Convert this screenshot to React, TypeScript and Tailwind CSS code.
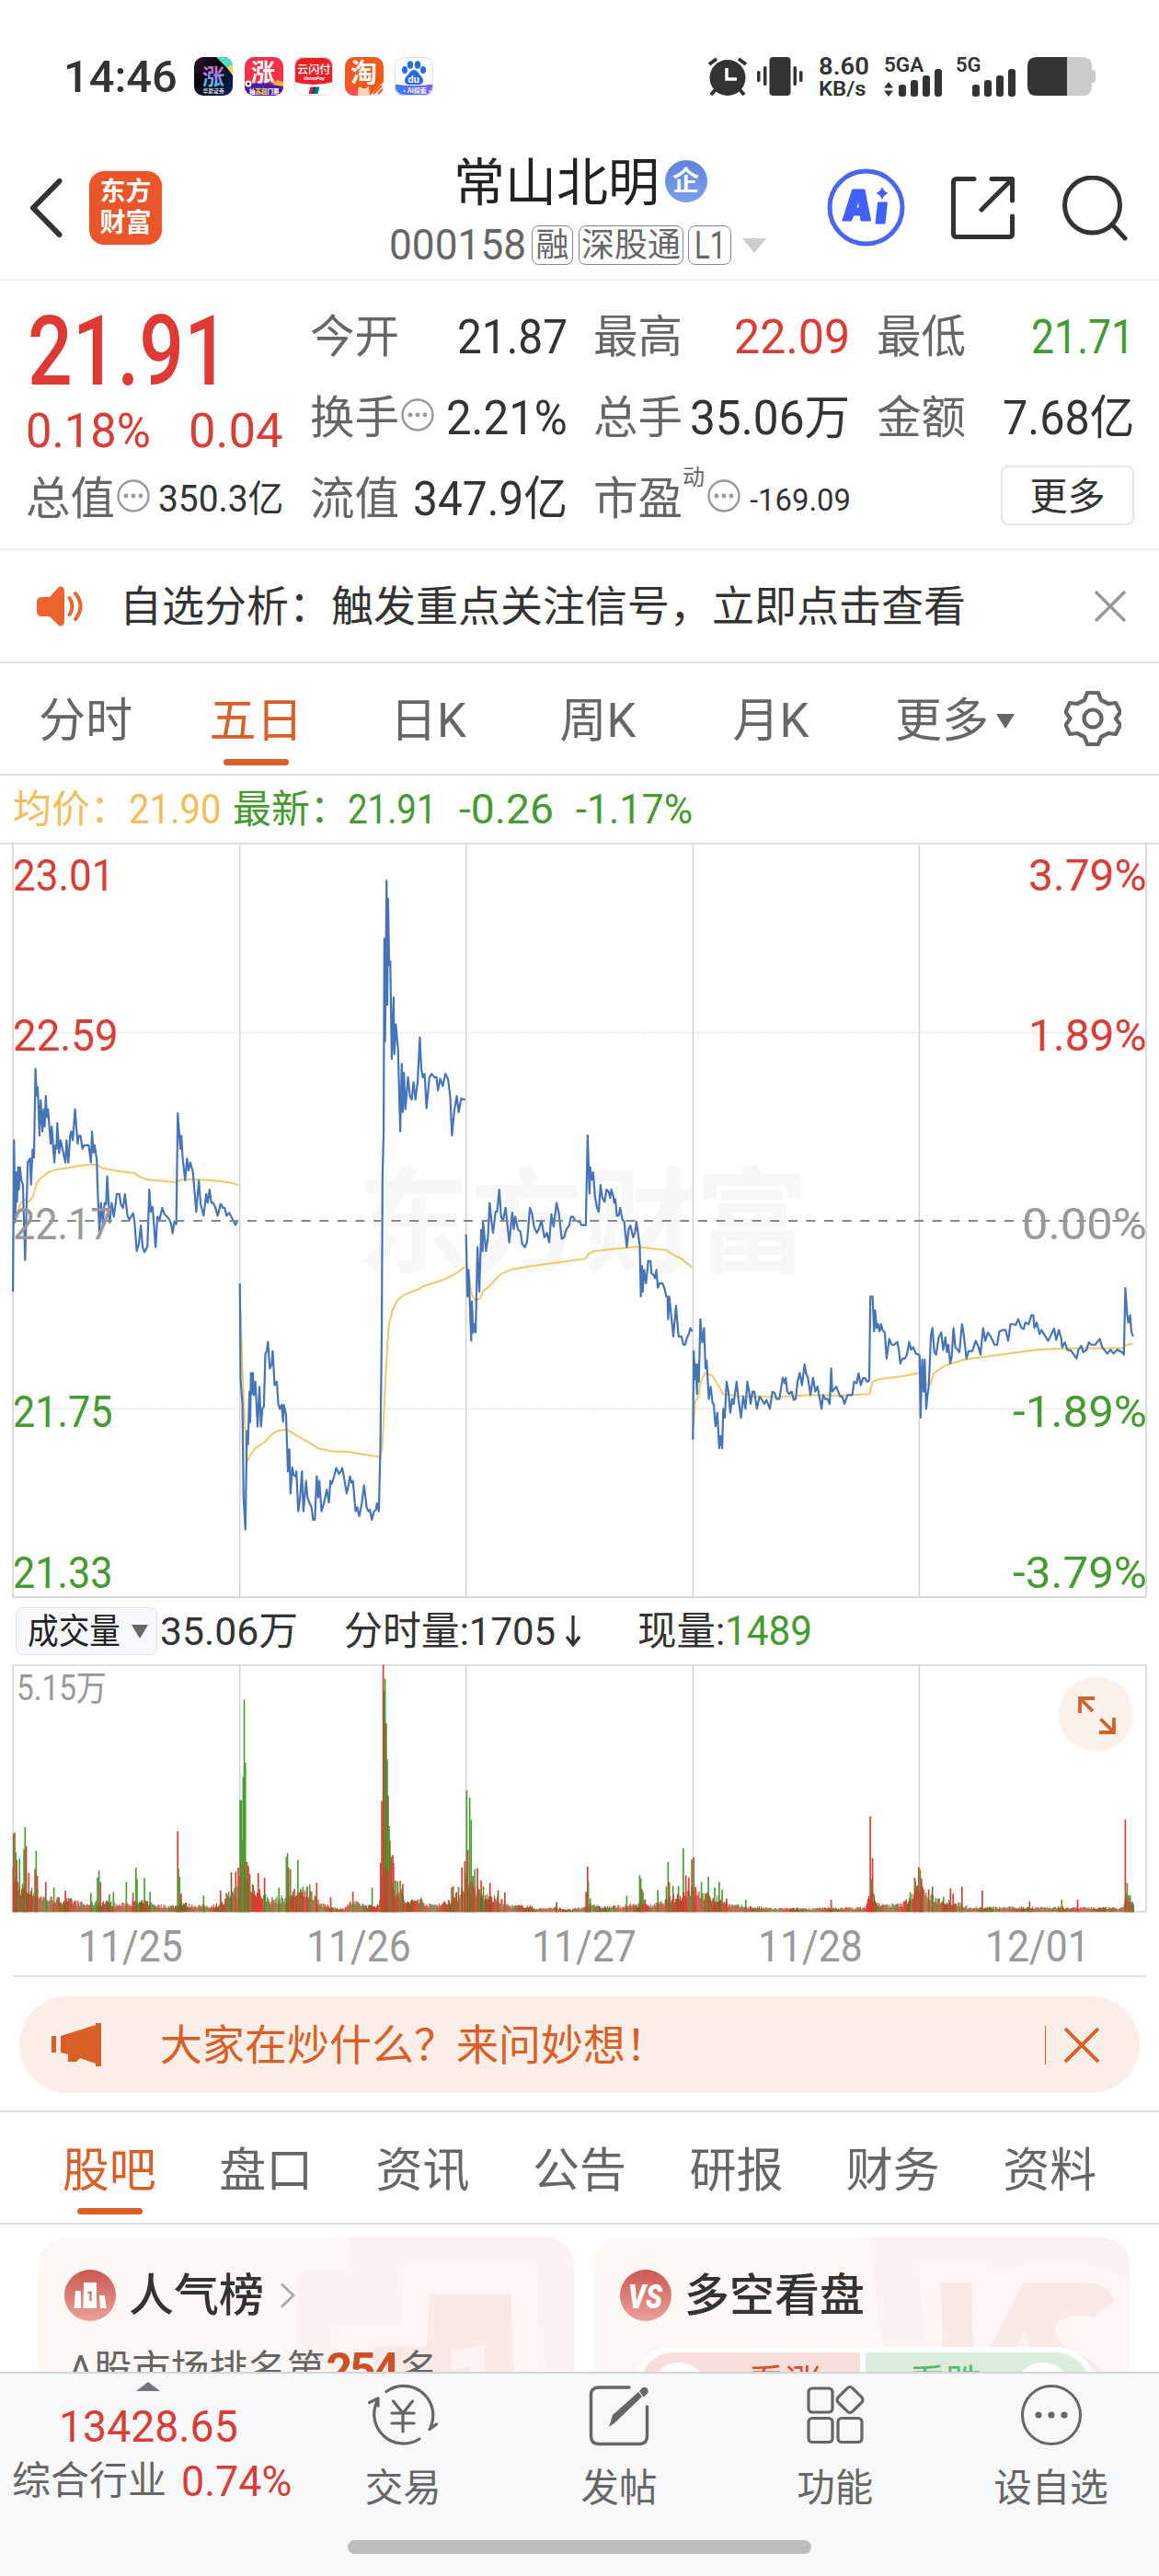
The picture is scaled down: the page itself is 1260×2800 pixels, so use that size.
import { useLayoutEffect, useRef, useState } from "react";
import type { ReactNode } from "react";

/** Text condensed or widened horizontally so that it fills the width its class gives it. */
function Fit({ className = "", children }: { className?: string; children: ReactNode }) {
  const box = useRef<HTMLSpanElement>(null);
  const text = useRef<HTMLSpanElement>(null);
  const [k, setK] = useState(1);
  useLayoutEffect(() => {
    if (box.current && text.current && text.current.offsetWidth) {
      setK(box.current.clientWidth / text.current.offsetWidth);
    }
  }, []);
  return (
    <span ref={box} className={`block shrink-0 whitespace-nowrap ${className}`}>
      <span ref={text} className="inline-block origin-left" style={{ transform: `scaleX(${k})` }}>
        {children}
      </span>
    </span>
  );
}

function More() {
  return (
    <svg className="h-[36px] w-[36px] shrink-0" viewBox="0 0 36 36" fill="none">
      <circle cx="18" cy="18" r="16.5" stroke="#999" strokeWidth="2.4" />
      <g fill="#999">
        <circle cx="10" cy="18" r="2.4" />
        <circle cx="18" cy="18" r="2.4" />
        <circle cx="26" cy="18" r="2.4" />
      </g>
    </svg>
  );
}

function Bars() {
  return (
    <svg className="h-[30px] w-[48px] shrink-0" viewBox="0 0 48 30" fill="#333">
      <rect x="0" y="17" width="8" height="13" rx="3" />
      <rect x="13" y="12" width="8" height="18" rx="3" />
      <rect x="26" y="7" width="8" height="23" rx="3" />
      <rect x="39" y="0" width="8" height="30" rx="3" />
    </svg>
  );
}

const cjk = "'Noto Sans CJK SC'";

function StatusBar() {
  return (
    <div className="flex h-[140px] shrink-0 items-start pl-[69px] pt-[62px] text-[#333]">
      <Fit className="w-[124px] text-[48px] font-medium leading-[44px]">14:46</Fit>
      <div className="ml-[18px] flex gap-[12.5px]">
        <svg className="h-[42px] w-[42px] overflow-visible" viewBox="0 0 42 42">
          <defs>
            <linearGradient id="a1" x1="0" y1="0" x2="1" y2="1">
              <stop offset="0" stopColor="#3b1030" />
              <stop offset=".4" stopColor="#07070d" />
              <stop offset="1" stopColor="#0a2560" />
            </linearGradient>
            <linearGradient id="a2" x1="0" y1="0" x2="0" y2="1">
              <stop offset="0" stopColor="#f45ba0" />
              <stop offset=".5" stopColor="#a880f0" />
              <stop offset="1" stopColor="#28dcec" />
            </linearGradient>
            <clipPath id="ac">
              <rect width="42" height="42" rx="10" />
            </clipPath>
          </defs>
          <g clipPath="url(#ac)">
            <rect width="42" height="42" fill="url(#a1)" />
            <path d="M24 0h18v18z" fill="#4fe0c0" />
            <path d="M36 12l6-4v12z" fill="#ffd54a" />
          </g>
          <text x="9" y="30" fontSize="24" fontWeight="700" fontFamily={cjk} fill="url(#a2)">涨</text>
          <text x="9.500" y="38.500" fontSize="5.800" fontWeight="700" fontFamily={cjk} fill="#ddd">华夏证券</text>
        </svg>
        <svg className="h-[42px] w-[42px] overflow-visible" viewBox="0 0 42 42">
          <g clipPath="url(#ac)">
            <rect width="42" height="42" fill="#f5304a" />
            <path d="M0 31q21-6 42 0v11H0z" fill="#4a1fa8" />
            <path d="M30 30l5-5 7 2v5z" fill="#ffb03a" />
            <circle cx="4" cy="29" r="3.500" fill="#fff" />
            <circle cx="4" cy="29" r="1.500" fill="#222" />
          </g>
          <text x="7" y="26" fontSize="26" fontWeight="700" fontFamily={cjk} fill="#fff">涨</text>
          <text x="5" y="40" fontSize="6.500" fontWeight="900" fontFamily={cjk} fill="#fff">抽<tspan fill="#ffd54a">苏超</tspan>门票</text>
        </svg>
        <svg className="h-[42px] w-[42px] overflow-visible" viewBox="0 0 42 42">
          <g clipPath="url(#ac)">
            <rect width="42" height="42" fill="#fff" />
            <path d="M0 0h42v27q-21 6-42 0z" fill="#ee1f23" />
            <path d="M17.500 32.500h5l-2 7.500h-5z" fill="#e21b2c" />
            <path d="M21 32.500h3.500l-2 7.500H19z" fill="#0b4a8c" />
            <path d="M24 32.500h3.500l-2 7.500H22z" fill="#007a80" />
          </g>
          <rect x=".5" y=".5" width="41" height="41" rx="10" fill="none" stroke="#e4e0e0" />
          <text x="3" y="18" fontSize="12.200" fontWeight="500" fontFamily={cjk} fill="#fff">云闪付</text>
          <text x="10" y="25" fontSize="5.500" fontWeight="700" fontStyle="italic" fill="#fff">UnionPay</text>
        </svg>
        <svg className="h-[42px] w-[42px] overflow-visible" viewBox="0 0 42 42">
          <g clipPath="url(#ac)">
            <rect width="42" height="42" fill="#f2581e" />
            <circle cx="9" cy="39" r="5" fill="#ff4d5e" />
            <path d="M14 42v-7l2-3 3 2h4l3-3 1 11z" fill="#f3d3b4" />
            <path d="M27 42L42 27v15z" fill="#fbe9dc" />
            <path d="M31 40l9-9M36 40l5-5" stroke="#f2581e" strokeWidth="2" />
          </g>
          <text x="6" y="28" fontSize="29" fontWeight="700" fontFamily={cjk} fill="#fff">淘</text>
        </svg>
        <svg className="h-[42px] w-[42px] overflow-visible" viewBox="0 0 42 42">
          <defs>
            <linearGradient id="b1" x1="0" x2="1">
              <stop offset="0" stopColor="#3c7dfa" />
              <stop offset="1" stopColor="#7b5cf5" />
            </linearGradient>
          </defs>
          <g clipPath="url(#ac)">
            <rect width="42" height="42" fill="#fff" />
            <path d="M0 29.500q21 3 42 0V42H0z" fill="url(#b1)" />
          </g>
          <rect x=".5" y=".5" width="41" height="41" rx="10" fill="none" stroke="#dde2ee" />
          <g fill="#2468ec">
            <ellipse cx="11" cy="14" rx="3" ry="4" />
            <ellipse cx="17" cy="8.500" rx="3.200" ry="4.200" />
            <ellipse cx="25" cy="8.500" rx="3.200" ry="4.200" />
            <ellipse cx="31" cy="14" rx="3" ry="4" />
            <path d="M21 14c4 0 5 4 8 7s3 9-3 9h-10c-6 0-6-6-3-9s4-7 8-7z" />
          </g>
          <text x="14.500" y="28" fontSize="11" fontWeight="700" fill="#fff">du</text>
          <text x="7" y="39" fontSize="7" fontWeight="700" fontFamily={cjk} fill="#fff">·AI探索·</text>
        </svg>
      </div>
      <svg className="ml-[298px] h-[42px] w-[44px]" viewBox="0 0 44 42" fill="none">
        <circle cx="22" cy="22.500" r="19.500" fill="#333" />
        <path d="M2 8L10 2M42 8L34 2" stroke="#333" strokeWidth="4" />
        <path d="M10 34l-6 7M34 34l6 7" stroke="#333" strokeWidth="4" />
        <path d="M21 12v12h11" stroke="#fff" strokeWidth="3.500" />
      </svg>
      <svg className="ml-[10px] h-[42px] w-[50px]" viewBox="0 0 50 42" fill="#333">
        <rect x="13.500" width="23" height="42" rx="4" />
        <rect x="0" y="15" width="3.500" height="12" rx="1.500" />
        <rect x="7" y="10" width="3.500" height="21" rx="1.500" />
        <rect x="39.500" y="10" width="3.500" height="21" rx="1.500" />
        <rect x="46" y="15" width="3.500" height="12" rx="1.500" />
      </svg>
      <div className="ml-[17px] font-semibold">
        <Fit className="w-[55px] text-[25px] leading-[22px]">8.60</Fit>
        <Fit className="mt-[3px] w-[52px] text-[22px] leading-[20px]">KB/s</Fit>
      </div>
      <div className="ml-[16px] w-[66px] font-semibold">
        <Fit className="w-[43px] text-[22px] leading-[18px]">5GA</Fit>
        <div className="-mt-[5px] flex items-end">
          <svg className="mr-[6px] h-[16px] w-[10px]" viewBox="0 0 10 16" fill="#333">
            <path d="M5 0l5 6.500H0zM5 16l5-6.500H0z" />
          </svg>
          <Bars />
        </div>
      </div>
      <div className="ml-[12px] w-[66px] font-semibold">
        <Fit className="w-[28px] text-[22px] leading-[18px]">5G</Fit>
        <div className="-mt-[5px] flex justify-end">
          <Bars />
        </div>
      </div>
      <svg className="ml-[12px] h-[42px] w-[74px]" viewBox="0 0 74 42">
        <path d="M43 0h17q10 0 10 10v4h1q3 0 3 3v8q0 3-3 3h-1v4q0 10-10 10H43z" fill="#cbcbcb" />
        <path d="M10 0h33v42H10Q0 42 0 32V10Q0 0 10 0z" fill="#333" />
      </svg>
    </div>
  );
}

function Header() {
  const tag =
    "flex h-[43px] items-center justify-center rounded-[8px] border border-[#888] text-[36px] leading-none";
  return (
    <div className="flex h-[165px] shrink-0 items-start border-b-2 border-[#f0f0f0] pl-[32px]">
      <svg className="mt-[53px] h-[66px] w-[38px]" viewBox="0 0 38 66" fill="none" stroke="#333" strokeWidth="6" strokeLinecap="round" strokeLinejoin="round">
        <path d="M32.500 4L4 33l28.500 29" />
      </svg>
      <div className="ml-[27px] mt-[46px] flex h-[80px] w-[79px] flex-col items-center justify-center rounded-[16px] bg-[#ea5529] text-[28px] font-bold leading-[34px] text-white">
        <span>东方</span>
        <span>财富</span>
      </div>
      <div className="ml-[244px] flex w-[414px] flex-col">
        <div className="mt-[25px] flex h-[64px] items-center pl-[73px]">
          <span className="mt-[4px] text-[56px] leading-[64px] text-[#222]">常山北明</span>
          <svg className="ml-[6px] h-[46px] w-[46px]" viewBox="0 0 46 46">
            <defs>
              <linearGradient id="qi" x1="0" y1="0" x2="0" y2="1">
                <stop offset="0" stopColor="#5f82de" />
                <stop offset="1" stopColor="#7ba0e6" />
              </linearGradient>
            </defs>
            <circle cx="23" cy="23" r="23" fill="url(#qi)" />
            <text x="8" y="33" fontSize="29" fontWeight="700" fontFamily={cjk} fill="#fff">企</text>
          </svg>
        </div>
        <div className="mt-[15px] flex items-center text-[#666]">
          <Fit className="ml-[3px] w-[149px] text-[46px] leading-[45px]">000158</Fit>
          <span className={`ml-[6px] w-[45px] ${tag}`}>融</span>
          <span className={`ml-[6px] w-[114px] ${tag}`}>深股通</span>
          <span className={`ml-[5px] w-[47px] ${tag}`}>
            <Fit className="w-[34px] text-[42px]">L1</Fit>
          </span>
          <svg className="ml-[12px] h-[16px] w-[26px]" viewBox="0 0 26 16">
            <path d="M0 0h26L13 16z" fill="#ccc" />
          </svg>
        </div>
      </div>
      <svg className="ml-[65px] mt-[43px] h-[85px] w-[85px]" viewBox="0 0 85 85">
        <circle cx="42.500" cy="42.500" r="39.500" fill="#fff" stroke="#4867ee" strokeWidth="5" />
        <g fill="#4160f5" stroke="#4160f5" strokeWidth="2" strokeLinejoin="round">
          <path d="M28 23.500h12.500l6.500 33h-9.500l-.8-6h-8.200l-2.500 6H17.500zM34.500 33l-3.500 10.500h5z" fillRule="evenodd" />
          <path d="M56 37.500h9l-2.500 22h-9z" />
        </g>
        <path d="M60 20q1.500 5 6.500 7-5 2-6.500 7-1.500-5-6.500-7 5-2 6.500-7z" fill="#4160f5" />
      </svg>
      <svg className="ml-[50px] mt-[52px] h-[68px] w-[69px]" viewBox="0 0 69 68" fill="none" stroke="#333" strokeWidth="5" strokeLinecap="round" strokeLinejoin="round">
        <path d="M25 2.500H6Q2.500 2.500 2.500 6v56q0 3.500 3.500 3.500h57q3.500 0 3.500-3.500V43M44 2.500h22.500V26M65 4L33 36" />
      </svg>
      <svg className="ml-[52px] mt-[51px] h-[72px] w-[72px]" viewBox="0 0 72 72" fill="none" stroke="#333" strokeWidth="5" strokeLinecap="round">
        <circle cx="32.500" cy="32" r="30" />
        <path d="M54 53l14 15" />
      </svg>
    </div>
  );
}

function Quote() {
  const row = "flex h-[88px] items-center";
  const lab = "shrink-0 whitespace-nowrap text-[48.5px] leading-[56px] text-[#666]";
  const val = "text-[51px] leading-[56px] text-[#333]";
  return (
    <div className="flex h-[293px] shrink-0 border-b-2 border-[#ededed] pt-[18px]">
      <div className="ml-[28px] w-[309px]">
        <div className="flex h-[116px] items-center pt-[4px]">
          <Fit className="ml-[2px] w-[219px] text-[105px] font-medium leading-[100px] text-[#dd3a33]">21.91</Fit>
        </div>
        <div className="flex h-[60px] items-center text-[#d93d35]">
          <Fit className="w-[136px] text-[51px] leading-[60px]">0.18%</Fit>
          <Fit className="ml-[41px] w-[102px] text-[51px] leading-[60px]">0.04</Fit>
        </div>
        <div className={row}>
          <span className={lab}>总值</span>
          <span className="-mt-[8px] ml-[2px]"><More /></span>
          <Fit className="ml-[9px] w-[136px] text-[40px] leading-[56px] text-[#333]">350.3亿</Fit>
        </div>
      </div>
      <div className="w-[280px]">
        <div className={`${row} justify-between`}>
          <span className={lab}>今开</span>
          <Fit className={`w-[120px] ${val}`}>21.87</Fit>
        </div>
        <div className={row}>
          <span className={lab}>换手</span>
          <span className="-mt-[8px] ml-[2px]"><More /></span>
          <Fit className={`ml-[13px] w-[132px] ${val}`}>2.21%</Fit>
        </div>
        <div className={`${row} justify-between`}>
          <span className={lab}>流值</span>
          <Fit className={`w-[168px] ${val}`}>347.9亿</Fit>
        </div>
      </div>
      <div className="ml-[28px] w-[279px]">
        <div className={`${row} justify-between`}>
          <span className={lab}>最高</span>
          <Fit className="w-[126px] text-[51px] leading-[56px] text-[#d93d35]">22.09</Fit>
        </div>
        <div className={`${row} justify-between`}>
          <span className={lab}>总手</span>
          <Fit className={`w-[174px] ${val}`}>35.06万</Fit>
        </div>
        <div className={row}>
          <span className={lab}>市盈</span>
          <span className="-mt-[49px] text-[24px] leading-[24px] text-[#666]">动</span>
          <span className="-mt-[8px] ml-[3px]"><More /></span>
          <Fit className="ml-[10px] w-[110px] text-[34px] leading-[54px] text-[#333]">-169.09</Fit>
        </div>
      </div>
      <div className="ml-[29px] w-[280px]">
        <div className={`${row} justify-between`}>
          <span className={lab}>最低</span>
          <Fit className="w-[112px] text-[51px] leading-[56px] text-[#459a31]">21.71</Fit>
        </div>
        <div className={`${row} justify-between`}>
          <span className={lab}>金额</span>
          <Fit className={`w-[143px] ${val}`}>7.68亿</Fit>
        </div>
        <div className={`${row} justify-end`}>
          <span className="-mt-[10px] flex h-[65px] w-[145px] items-center justify-center rounded-[8px] border-2 border-[#e4e7e9] pt-[3px] text-[41px] leading-[56px] text-[#333]">
            更多
          </span>
        </div>
      </div>
    </div>
  );
}

function Notice() {
  return (
    <div className="flex h-[123px] shrink-0 items-center border-b-2 border-[#dcdcdc] pl-[39px]">
      <svg className="h-[44px] w-[53px]" viewBox="0 0 53 44" fill="none">
        <path d="M7 12h8L25 1q6-2 6 6v30q0 8-6 6L15 33H7q-6 0-6-5V17q0-5 6-5z" fill="#ec632c" />
        <path d="M36.500 13q6 9 0 18M43 8q11 14 0 28" stroke="#ec632c" strokeWidth="4" strokeLinecap="round" />
      </svg>
      <span className="ml-[38px] whitespace-nowrap text-[46px] leading-[60px] text-[#333]">
        自选分析：触发重点关注信号，立即点击查看
      </span>
      <svg className="ml-[140px] h-[34px] w-[34px]" viewBox="0 0 34 34" stroke="#999" strokeWidth="3.500">
        <path d="M1 1l32 32M33 1L1 33" />
      </svg>
    </div>
  );
}

function PeriodTabs() {
  return (
    <div className="grid h-[122px] shrink-0 grid-cols-[186px_185px_185px_188px_188px_227px_101px] border-b-2 border-[#dcdcdc] text-[51px] leading-[126px] text-[#666]">
      <span className="text-center">分时</span>
      <span className="relative text-center text-[#d95f27]">
        五日
        <span className="absolute left-[57px] top-[104px] h-[7px] w-[71px] rounded-full bg-[#d95f27]" />
      </span>
      <span className="pl-[4px] text-center">日K</span>
      <span className="text-center">周K</span>
      <span className="text-center">月K</span>
      <span className="flex items-center pl-[41px]">
        更多
        <svg className="ml-[8px] h-[16px] w-[20px]" viewBox="0 0 20 16">
          <path d="M0 0h20L10 16z" fill="#666" />
        </svg>
      </span>
      <span className="flex items-center pb-[6px]">
        <svg className="-ml-[2px] h-[62px] w-[62px]" viewBox="0 0 62 62" fill="none" stroke="#666" strokeWidth="4.200" strokeLinejoin="round">
          <path d="M25 3h12l3 8 8 4 8-1 5 10-5 7 5 7-5 10-8-1-8 4-3 8H25l-3-8-8-4-8 1L1.500 38l5-7-5-7L6 14l8 1 8-4z" />
          <circle cx="31" cy="31" r="9.500" />
        </svg>
      </span>
    </div>
  );
}

function Legend() {
  return (
    <div className="flex h-[73px] shrink-0 items-center whitespace-nowrap pl-[14px] text-[42px] leading-[76px] text-[#459a31]">
      <span className="w-[126px] text-[#f0be5a]">均价：</span>
      <Fit className="w-[101px] text-[44px] text-[#f0be5a]">21.90</Fit>
      <span className="ml-[12px] w-[125px]">最新：</span>
      <Fit className="w-[97px] text-[44px]">21.91</Fit>
      <Fit className="ml-[24px] w-[103px] text-[44px]">-0.26</Fit>
      <Fit className="ml-[24px] w-[127px] text-[44px]">-1.17%</Fit>
    </div>
  );
}

const PRICE = [
  "35,922 38,615 41,780 44,680 46,740 49,670 51,715 54,670 58,697 62,705 68,858 75,660 81,652 84,705 88,634 92,650 96,470 99,525 102,507 107,605 110,534 115,597 118,552 121,587 124,525 127,568 130,552 137,622 140,587 147,660 150,625 153,632 155,580 160,641 164,615 170,636 177,660 180,615 185,660 190,605 193,597 197,615 203,552 210,622 213,606 218,606 223,632 228,625 240,625 246,660 249,597 253,640 256,625 262,655 264,710 269,800 273,742 278,782 283,742 287,745 290,688 297,782 302,742 308,770 316,724 323,724 327,745 333,752 338,724 345,768 350,776 360,763 364,780 370,840 376,824 381,788 386,832 391,842 399,830 404,715 408,760 413,750 421,832 426,770 432,775 439,752 445,765 452,770 458,776 463,785 467,804 472,780 477,785 481,560 488,632 491,606 494,650 501,696 506,652 510,676 515,660 522,680 531,760 538,697 543,745 551,768 558,724 562,742 567,715 572,742 577,742 583,752 589,768 597,744 603,752 608,752 613,768 620,762 630,776 637,787 642,780",
  "649,906 651,1100 656,1150 659,1340 664,1405 668,1205 671,1232 675,1125 677,1187 679,1087 681,1130 684,1087 687,1132 691,1105 697,1196 702,1115 706,1196 710,1160 714,1155 718,1048 722,1043 725,1024 730,1078 735,1070 738,1043 743,1112 749,1105 753,1150 757,1160 762,1152 766,1186 768,1152 774,1172 779,1287 783,1242 786,1332 791,1279 795,1295 800,1297 802,1287 807,1368 812,1340 817,1287 821,1368 828,1306 832,1340 837,1350 843,1360 847,1385 852,1385 857,1297 861,1340 864,1306 870,1368 877,1350 884,1324 890,1350 894,1306 898,1312 904,1297 910,1280 917,1292 922,1287 926,1280 931,1300 938,1332 943,1315 947,1297 951,1310 955,1306 962,1368 967,1360 972,1378 979,1352 985,1315 992,1360 997,1368 1001,1365 1006,1385 1012,1368 1017,1365 1020,1352 1025,1368 1029,1250 1033,1000 1035,690 1038,600 1040,206 1042,414 1046,88 1048,340 1050,125 1053,260 1056,252 1060,450 1065,325 1067,440 1071,380 1077,430 1083,597 1087,460 1090,558 1093,478 1097,552 1104,487 1109,525 1114,532 1119,497 1124,532 1130,497 1136,406 1140,470 1144,487 1149,480 1154,550 1162,487 1168,480 1175,487 1181,487 1185,514 1191,490 1198,505 1205,480 1212,490 1218,525 1223,605 1229,555 1236,525 1241,558 1245,542 1248,530 1252,532 1259,532",
  "1261,806 1265,932 1268,878 1275,1022 1277,942 1280,1005 1283,988 1287,1005 1292,832 1297,922 1302,797 1306,840 1307,780 1315,840 1320,815 1325,742 1330,780 1334,803 1341,760 1345,760 1351,715 1356,770 1361,778 1368,752 1373,788 1378,822 1386,762 1390,795 1394,770 1402,797 1408,800 1413,825 1420,832 1426,822 1434,752 1440,765 1445,790 1452,803 1458,795 1465,778 1473,812 1480,803 1486,822 1492,765 1498,790 1506,742 1512,762 1520,815 1526,812 1533,795 1540,788 1545,770 1551,770 1556,778 1568,780 1573,787 1585,787 1590,605 1595,723 1597,670 1601,695 1605,680 1610,730 1615,750 1620,760 1625,706 1630,732 1636,740 1641,715 1647,720 1651,732 1654,715 1660,730 1662,742 1665,735 1669,768 1674,768 1678,752 1684,776 1689,780 1696,832 1701,795 1706,788 1713,812 1718,803 1722,780 1728,812 1731,830 1734,932 1737,870 1739,922 1743,878 1748,905 1754,860 1760,860 1763,885 1768,888 1772,895 1776,878 1780,914 1785,905 1792,905 1798,915 1803,932 1806,932 1808,978 1811,932 1816,970 1822,1013 1829,951 1836,1013 1844,1013 1849,1030 1854,1030 1859,1015 1863,1010 1868,996 1873,1003",
  "1875,1223 1877,1043 1881,1100 1883,1070 1886,1130 1888,1070 1891,1105 1895,978 1900,1025 1905,996 1909,1078 1912,1062 1918,1140 1923,1115 1928,1148 1931,1150 1936,1195 1941,1168 1946,1240 1950,1215 1954,1240 1957,1160 1961,1178 1966,1105 1971,1125 1976,1168 1981,1140 1985,1150 1993,1105 1998,1140 2005,1178 2011,1135 2017,1160 2022,1105 2027,1125 2031,1150 2036,1125 2041,1125 2048,1160 2055,1135 2062,1142 2068,1150 2074,1142 2083,1160 2090,1125 2096,1128 2101,1140 2109,1140 2113,1120 2118,1097 2123,1108 2126,1097 2130,1125 2136,1130 2142,1125 2148,1142 2153,1140 2158,1105 2164,1087 2170,1112 2177,1070 2181,1088 2186,1097 2193,1132 2200,1097 2206,1125 2212,1115 2218,1140 2223,1160 2227,1132 2233,1140 2239,1140 2245,1150 2249,1078 2252,1125 2257,1120 2263,1115 2268,1125 2274,1135 2279,1135 2285,1150 2293,1132 2306,1132 2311,1105 2318,1108 2323,1088 2329,1112 2335,1098 2341,1098 2346,1105 2352,1103 2355,932 2361,932 2365,1003 2368,960 2372,996 2376,988 2380,1003 2384,988 2388,1000 2394,1005 2399,1058 2406,1018 2413,1030 2420,1030 2428,1024 2432,1040 2436,1068 2442,1058 2448,1058 2454,1050 2460,1024 2465,1040 2471,1035 2478,1048 2487,1050",
  "2488,1050 2491,1178 2495,1060 2499,1125 2502,1060 2506,1160 2510,1130 2513,1115 2519,1010 2523,996 2528,1045 2533,1050 2540,1015 2547,1005 2552,1040 2558,1015 2562,1045 2566,1030 2571,1068 2575,1055 2580,996 2585,1035 2591,1040 2596,1045 2603,988 2608,1010 2615,1058 2621,1043 2631,1043 2640,1022 2648,1035 2653,1050 2660,996 2666,1022 2673,1005 2682,1015 2691,1030 2698,1030 2704,1003 2713,1000 2721,1000 2728,1022 2734,988 2741,988 2748,990 2755,978 2764,996 2770,998 2774,985 2783,988 2791,970 2796,970 2799,996 2805,985 2813,1008 2818,1000 2828,1012 2836,1022 2844,1010 2852,997 2858,1020 2865,1000 2871,1015 2874,1035 2881,1025 2888,1040 2898,1042 2913,1058 2918,1040 2926,1032 2931,1045 2940,1040 2946,1025 2953,1030 2963,1030 2976,1018 2982,1035 2988,1040 2996,1048 3005,1040 3013,1048 3023,1040 3036,1045 3041,1050 3045,915 3050,970 3053,985 3058,970 3061,1003 3066,1013",
];

const AVERAGE = [
  "40,785 48,760 55,745 65,735 78,740 88,730 95,715 100,700 110,692 130,680 150,675 190,670 220,666 262,664 275,671 310,676 365,682 380,690 400,695 475,700 490,695 540,695 600,698 630,702 646,706",
  "651,960 656,1080 662,1180 667,1270 680,1250 690,1240 715,1228 735,1212 750,1205 775,1202 800,1213 840,1230 860,1240 900,1246 940,1247 990,1253 1028,1258 1034,1240 1040,1150 1045,1070 1052,990 1062,960 1075,940 1090,930 1130,918 1150,910 1200,898 1230,887 1258,872",
  "1261,872 1268,880 1275,925 1287,942 1300,935 1308,920 1320,914 1340,898 1355,887 1380,878 1440,870 1500,864 1568,857 1585,855 1593,845 1608,840 1668,835 1723,831 1768,835 1803,838 1818,846 1843,855 1873,873",
  "1876,1200 1881,1145 1890,1135 1896,1105 1908,1087 1928,1093 1943,1112 1956,1130 1998,1134 2108,1136 2188,1132 2268,1133 2353,1130 2361,1105 2378,1100 2448,1093 2487,1087",
  "2490,1120 2503,1110 2518,1110 2526,1088 2558,1072 2608,1060 2688,1052 2748,1046 2808,1040 2888,1037 3038,1037 3048,1030 3065,1028",
];

const DAY_LINES = [649, 1261, 1875, 2487.5];

function PriceChart() {
  const l = "absolute left-[14px] text-[48px] leading-[48px]";
  const r = "absolute right-[13px] text-[48px] leading-[48px]";
  return (
    <div className="relative h-[821px] shrink-0">
      <Fit className="absolute left-[388px] top-[350px] w-[491px] text-[124px] font-bold leading-[130px] text-[#f7f7f7]">
        东方财富
      </Fit>
      <svg className="absolute inset-0 h-full w-full" viewBox="0 11 3136 1533" preserveAspectRatio="none" fill="none">
        <g stroke="#dadada" strokeWidth="2">
          <path d="M0 12.500H3136M35 1542H3102" vectorEffect="non-scaling-stroke" />
          <path d="M35 12V1542M3101 12V1542" vectorEffect="non-scaling-stroke" />
          {DAY_LINES.map((x) => (
            <path key={x} d={`M${x} 15V1542`} stroke="#d2d2d2" strokeWidth="1.500" vectorEffect="non-scaling-stroke" />
          ))}
        </g>
        <path d="M35 397H3101M35 1160H3101" stroke="#cfcfcf" strokeDasharray="1.500 1.500" vectorEffect="non-scaling-stroke" />
        {AVERAGE.map((p) => (
          <polyline key={p} points={p} stroke="#f0c866" strokeWidth="2" strokeLinejoin="round" vectorEffect="non-scaling-stroke" />
        ))}
        {PRICE.map((p) => (
          <polyline key={p} points={p} stroke="#4674b8" strokeWidth="2.200" strokeLinejoin="round" vectorEffect="non-scaling-stroke" />
        ))}
        <path d="M35 778.500H3101" stroke="#888" strokeWidth="2" strokeDasharray="10 9.600" vectorEffect="non-scaling-stroke" />
      </svg>
      <div className="text-[#d93d35]">
        <Fit className={`${l} top-[12px] w-[111px]`}>23.01</Fit>
        <Fit className={`${l} top-[186px] w-[115px]`}>22.59</Fit>
        <Fit className={`${r} top-[12px] w-[129px]`}>3.79%</Fit>
        <Fit className={`${r} top-[186px] w-[129px]`}>1.89%</Fit>
      </div>
      <div className="text-[#999]">
        <Fit className={`${l} top-[391px] w-[109px]`}>22.17</Fit>
        <Fit className={`${r} top-[391px] w-[136px]`}>0.00%</Fit>
      </div>
      <div className="text-[#459a31]">
        <Fit className={`${l} top-[595px] w-[109px]`}>21.75</Fit>
        <Fit className={`${l} top-[770px] w-[109px]`}>21.33</Fit>
        <Fit className={`${r} top-[595px] w-[146px]`}>-1.89%</Fit>
        <Fit className={`${r} top-[770px] w-[146px]`}>-3.79%</Fit>
      </div>
    </div>
  );
}

function VolumeHead() {
  return (
    <div className="flex h-[72px] shrink-0 items-center pl-[17px] text-[43px] leading-[64px] text-[#333]">
      <div className="flex h-[52px] w-[154px] items-center rounded-[8px] border border-[#dfe2e6] bg-[#f6f8fb] pl-[12px] text-[#222]">
        <Fit className="w-[101px] text-[38px] leading-[54px]">成交量</Fit>
        <svg className="ml-[12px] h-[15px] w-[18px]" viewBox="0 0 18 15">
          <path d="M0 0h18L9 15z" fill="#666" />
        </svg>
      </div>
      <Fit className="ml-[3px] w-[150px]">35.06万</Fit>
      <Fit className="ml-[50px] w-[230px]">分时量:1705</Fit>
      <svg className="ml-[9px] h-[34px] w-[20px]" viewBox="0 0 20 34" fill="none" stroke="#333" strokeWidth="3.200">
        <path d="M10 0v32M3 23l7 9 7-9" />
      </svg>
      <Fit className="ml-[60px] w-[95px]">现量:</Fit>
      <Fit className="w-[95px] text-[45px] text-[#459a31]">1489</Fit>
    </div>
  );
}

/** Typical bar height along the time axis: [x, height]. */
const VOLUME_BASE: [number, number][] = [
  [35, 150], [55, 105], [80, 90], [100, 75], [130, 55], [200, 45], [230, 30], [262, 40], [285, 42], [320, 28], [350, 38],
  [400, 40], [430, 26], [475, 24], [488, 45], [510, 28], [570, 24], [605, 38], [625, 80], [648, 95], [652, 230], [664, 180],
  [670, 130], [700, 85], [730, 50], [770, 55], [800, 80], [850, 75], [870, 30], [925, 12], [950, 40], [1000, 25],
  [1026, 30], [1030, 110], [1050, 230], [1065, 90], [1085, 80], [1100, 38], [1135, 55], [1160, 28], [1200, 36],
  [1240, 70], [1262, 140], [1280, 100], [1310, 65], [1350, 50], [1380, 24], [1430, 26], [1450, 14], [1505, 18],
  [1540, 10], [1585, 20], [1600, 40], [1620, 20], [1690, 24], [1728, 34], [1745, 45], [1760, 24], [1795, 40],
  [1830, 65], [1870, 95], [1885, 75], [1950, 55], [1975, 28], [2040, 20], [2100, 14], [2250, 16], [2340, 18],
  [2356, 80], [2380, 28], [2440, 30], [2475, 80], [2492, 110], [2510, 60], [2580, 42], [2620, 20], [2700, 18],
  [2800, 20], [2900, 18], [3040, 16], [3048, 70], [3058, 48], [3068, 28],
];

/** Individual bars that stand out: [x, height, colour]. */
const VOLUME_PEAKS: [number, number, "r" | "g" | "m"][] = [
  [37, 255, "r"], [40, 260, "g"], [43, 195, "g"], [45, 170, "r"], [53, 175, "g"], [65, 205, "g"], [68, 277, "g"], [71, 215, "r"],
  [78, 128, "r"], [95, 140, "r"], [98, 200, "g"], [101, 118, "r"], [124, 98, "r"], [146, 80, "g"], [177, 70, "r"],
  [246, 62, "g"], [264, 113, "g"], [268, 135, "g"], [272, 98, "r"], [296, 58, "g"], [307, 66, "g"], [342, 98, "g"],
  [360, 63, "r"], [368, 145, "g"], [371, 108, "g"], [391, 111, "g"], [406, 66, "g"], [481, 263, "r"], [483, 142, "g"],
  [486, 115, "g"], [490, 60, "r"], [551, 54, "g"], [597, 70, "r"], [613, 62, "r"], [626, 130, "m"], [638, 132, "r"],
  [645, 145, "r"], [650, 365, "g"], [653, 365, "g"], [655, 235, "g"], [658, 440, "g"], [661, 692, "g"], [664, 487, "g"],
  [668, 163, "r"], [672, 150, "m"], [676, 124, "r"], [699, 127, "r"], [716, 112, "r"], [755, 80, "g"], [775, 180, "g"],
  [778, 192, "g"], [781, 145, "r"], [786, 140, "g"], [797, 75, "r"], [806, 170, "g"], [820, 83, "g"], [831, 83, "m"],
  [838, 90, "g"], [857, 95, "r"], [895, 48, "r"], [955, 66, "r"], [1007, 80, "g"], [1030, 160, "r"], [1033, 362, "r"],
  [1037, 806, "r"], [1039, 720, "m"], [1042, 761, "g"], [1045, 615, "m"], [1048, 497, "g"], [1050, 380, "m"],
  [1053, 280, "g"], [1055, 232, "m"], [1059, 180, "m"], [1063, 186, "r"], [1065, 160, "r"], [1070, 103, "g"],
  [1076, 100, "m"], [1083, 102, "g"], [1090, 92, "r"], [1222, 80, "g"], [1226, 84, "r"], [1241, 82, "g"],
  [1250, 145, "r"], [1258, 166, "r"], [1263, 397, "g"], [1266, 202, "r"], [1271, 373, "g"], [1275, 300, "g"],
  [1280, 118, "m"], [1285, 140, "g"], [1292, 143, "r"], [1302, 103, "r"], [1308, 84, "g"], [1326, 95, "r"],
  [1348, 70, "m"], [1366, 64, "r"], [1506, 32, "m"], [1586, 66, "r"], [1590, 148, "r"], [1592, 100, "g"],
  [1597, 45, "g"], [1696, 53, "g"], [1731, 120, "g"], [1734, 110, "g"], [1737, 75, "r"], [1740, 65, "g"],
  [1780, 72, "g"], [1803, 83, "g"], [1808, 164, "g"], [1811, 98, "r"], [1821, 85, "g"], [1836, 84, "g"],
  [1849, 208, "g"], [1856, 120, "r"], [1864, 113, "r"], [1872, 172, "g"], [1877, 178, "r"], [1882, 82, "r"],
  [1898, 98, "g"], [1908, 60, "g"], [1917, 115, "g"], [1934, 80, "g"], [1946, 98, "g"], [1954, 73, "g"],
  [1966, 44, "r"], [2018, 40, "g"], [2249, 40, "r"], [2355, 312, "r"], [2358, 108, "g"], [2361, 176, "r"],
  [2365, 60, "g"], [2463, 65, "g"], [2475, 112, "r"], [2477, 102, "g"], [2486, 146, "r"], [2490, 138, "g"],
  [2493, 110, "r"], [2497, 78, "r"], [2513, 73, "r"], [2523, 83, "m"], [2553, 50, "g"], [2572, 78, "r"],
  [2579, 60, "r"], [2603, 83, "r"], [2658, 70, "r"], [2786, 35, "r"], [2873, 40, "g"], [2916, 40, "r"],
  [3045, 302, "r"], [3050, 95, "g"], [3054, 55, "g"], [3058, 54, "g"], [3064, 34, "m"],
];

const BAR_COLOR = { r: "#dd3b33", g: "#48a033", m: "#7d6428" };

function baseHeight(x: number) {
  for (let i = 1; i < VOLUME_BASE.length; i++) {
    const [x1, h1] = VOLUME_BASE[i];
    if (x <= x1) {
      const [x0, h0] = VOLUME_BASE[i - 1];
      return h0 + ((h1 - h0) * (x - x0)) / (x1 - x0);
    }
  }
  return 16;
}

function minuteBars() {
  const bars: [number, number, "r" | "g" | "m"][] = [];
  let seed = 7;
  const rnd = () => {
    seed = (seed * 16807) % 2147483647;
    return seed / 2147483647;
  };
  for (let x = 35; x < 3068; x += 2.55) {
    const c = rnd();
    bars.push([x, baseHeight(x) * (0.5 + rnd() * 0.5), c < 0.48 ? "r" : c < 0.66 ? "g" : "m"]);
  }
  return bars;
}

const MINUTES = minuteBars();

function VolumeChart() {
  return (
    <div className="relative h-[270px] shrink-0">
      <svg className="absolute inset-0 h-full w-full" viewBox="0 236.500 3136 809.500" preserveAspectRatio="none" fill="none">
        <path d="M33 238.500H3103M35 238V1044M3101 238V1044M3060 1043H3103" stroke="#dedede" strokeWidth="2" vectorEffect="non-scaling-stroke" />
        {DAY_LINES.map((x) => (
          <path key={x} d={`M${x} 238V1044`} stroke="#d2d2d2" strokeWidth="1.500" vectorEffect="non-scaling-stroke" />
        ))}
        {VOLUME_PEAKS.map(([x, h, c], i) => (
          <rect key={i} x={x - 2.2} y={1044 - h} width="4.200" height={h} fill={BAR_COLOR[c]} />
        ))}
        {MINUTES.map(([x, h, c], i) => (
          <rect key={i} x={x - 1.3} y={1044 - h} width="2.900" height={h} fill={BAR_COLOR[c]} />
        ))}
      </svg>
      <Fit className="absolute left-[18px] top-[5px] w-[98px] text-[38px] leading-[42px] text-[#999]">5.15万</Fit>
      <svg className="absolute right-[28px] top-[14px] h-[81px] w-[81px]" viewBox="0 0 81 81" fill="none">
        <circle cx="40.500" cy="40.500" r="40.500" fill="#fbf1ea" />
        <path d="M39 23H23v16M23.500 23.500L37 37M60 44v16H44M59 59L45.500 45.500" stroke="#d0622a" strokeWidth="3.800" />
      </svg>
    </div>
  );
}

function Dates() {
  const d = "w-[114px] text-[48px] leading-[58px]";
  return (
    <div className="mx-[14px] flex h-[70px] shrink-0 border-b-2 border-[#e4e4e4] pt-[8px] text-[#999]">
      <Fit className={`ml-[71px] ${d}`}>11/25</Fit>
      <Fit className={`ml-[134px] ${d}`}>11/26</Fit>
      <Fit className={`ml-[131px] ${d}`}>11/27</Fit>
      <Fit className={`ml-[132px] ${d}`}>11/28</Fit>
      <Fit className={`ml-[133px] ${d}`}>12/01</Fit>
    </div>
  );
}

function Promo() {
  return (
    <div className="flex h-[147px] shrink-0 items-start border-b-2 border-[#dcdcdc] px-[21px] pt-[21px]">
      <div className="flex h-[105px] w-[1218px] items-center rounded-full bg-[#fbeee6] text-[#d95f27]">
        <svg className="ml-[35px] h-[47px] w-[54px]" viewBox="0 0 54 47" fill="#d95f27">
          <path d="M0 14h5v18H0zM10 14L48 2V0h6v47h-6v-3L31 38l-4 4H18v-8l-8-2z" />
        </svg>
        <span className="ml-[64px] w-[700px] whitespace-nowrap text-[46px] leading-[60px]">大家在炒什么？来问妙想！</span>
        <span className="ml-[262px] h-[42px] w-px bg-[#d95f27]" />
        <svg className="ml-[20px] h-[38px] w-[38px]" viewBox="0 0 38 38" stroke="#d95f27" strokeWidth="3.800">
          <path d="M1 1l36 36M37 1L1 37" />
        </svg>
      </div>
    </div>
  );
}

function SectionTabs() {
  return (
    <div className="grid h-[122px] shrink-0 grid-cols-7 border-b-2 border-[#dcdcdc] px-[33.5px] text-center text-[51px] leading-[127px] text-[#666]">
      {["股吧", "盘口", "资讯", "公告", "研报", "财务", "资料"].map((t, i) => (
        <span key={t} className={i === 0 ? "relative text-[#d95f27]" : ""}>
          {t}
          {i === 0 && <span className="absolute left-[50px] top-[104px] h-[7px] w-[71px] rounded-full bg-[#d95f27]" />}
        </span>
      ))}
    </div>
  );
}

function Cards() {
  const card = "relative h-[300px] w-[582px] shrink-0 overflow-hidden rounded-[30px] bg-[#fef8f5]";
  return (
    <div className="flex h-[160px] shrink-0 gap-[22px] overflow-hidden pl-[42px] pt-[14px]">
      <div className={card}>
        <svg className="absolute inset-0 h-[300px] w-[582px]" viewBox="0 0 582 300">
          <path d="M338 0H582V300H283V37h53z" fill="#fcf3f0" />
          <path d="M398 28H541l6 272H325V96h68z" fill="#fdf6f3" />
          <path d="M425 62h89l6 238H365V118h57z" fill="#f9eae7" />
          <path d="M449 124l36-8v80h-16v-56l-20 4z" fill="#fdf4f2" />
        </svg>
        <div className="relative flex h-[126px] items-center pl-[28px]">
          <svg className="h-[56px] w-[56px]" viewBox="0 0 56 56">
            <defs>
              <linearGradient id="rd" x1="0" y1="0" x2="0" y2="1">
                <stop offset="0" stopColor="#cb5850" />
                <stop offset="1" stopColor="#eaa29c" />
              </linearGradient>
            </defs>
            <circle cx="28" cy="28" r="28" fill="url(#rd)" />
            <path d="M12 23h6v19h-7.500zM21 14h14v28H20.500zM38 28h6l1.500 14H39z" fill="#fff" />
            <text x="24" y="34" fontSize="14" fontWeight="700" fill="#cf6a62">1</text>
          </svg>
          <span className="ml-[14px] mt-[2px] text-[49px] font-medium leading-[60px] text-[#333]">人气榜</span>
          <svg className="ml-[17px] h-[28px] w-[18px]" viewBox="0 0 18 28" fill="none" stroke="#aaa" strokeWidth="3">
            <path d="M2 1.500L15 14 2 26.500" />
          </svg>
        </div>
        <div className="relative -mt-[12px] flex h-[60px] items-center whitespace-nowrap pl-[32px] text-[42px] leading-[60px] text-[#666]">
          A股市场排名第
          <span className="pl-[1px] text-[50px] font-bold leading-[60px] tracking-[-3px] text-[#cf4f24]">254</span>
          <span className="pl-[3px]">名</span>
        </div>
      </div>
      <div className={card}>
        <svg className="absolute inset-0 h-[300px] w-[582px]" viewBox="0 0 582 300">
          <path d="M299 0H582V300H335z" fill="#fcf2ef" />
          <path d="M352 26h72l15 16q60-34 143 5V300H375z" fill="#fdf6f3" />
          <path d="M377 49h33l3 105 54-105h60q30-2 39 20l-24 18q-25-8-40 8-6 20 30 35 35 15 30 60H380z" fill="#f9eae7" />
          <path d="M440 150l28-48 20 52z" fill="#fdf4f2" />
        </svg>
        <div className="relative flex h-[126px] items-center pl-[28px]">
          <svg className="h-[56px] w-[56px]" viewBox="0 0 56 56">
            <circle cx="28" cy="28" r="28" fill="url(#rd)" />
            <text x="9" y="42" fontSize="36" fontWeight="900" fontStyle="italic" textLength="37" lengthAdjust="spacingAndGlyphs" fill="#fff">VS</text>
          </svg>
          <span className="ml-[14px] mt-[2px] text-[49px] font-medium leading-[60px] text-[#333]">多空看盘</span>
        </div>
        <div className="relative -mt-[7px] ml-[42px] flex h-[90px] w-[504px] justify-between overflow-hidden rounded-full border-6 border-white bg-white text-[40px] leading-[68px]">
          <div className="flex h-full w-[241px] items-start bg-[#f8dfdc] text-[#d0522a]">
            <span className="ml-[12px] mt-[11px] h-[64px] w-[64px] rounded-full bg-white" />
            <span className="ml-[43px]">看涨</span>
          </div>
          <div className="flex h-full w-[245px] items-start bg-[#dbeedd] text-[#5cb56d]">
            <span className="ml-[47px]">看跌</span>
            <span className="ml-[34px] mt-[11px] h-[64px] w-[64px] rounded-full bg-white" />
          </div>
        </div>
      </div>
    </div>
  );
}

function BottomBar() {
  const item = "flex flex-col items-center";
  const label = "mt-[20px] whitespace-nowrap text-[41.5px] leading-[50px]";
  const icon = "h-[70px] w-[78px]";
  return (
    <div className="flex h-[222px] shrink-0 flex-col border-t-2 border-[#d4d5db] bg-[#f7f8fa]">
      <div className="flex h-[180px] text-[#666]">
        <div className="w-[321px]">
          <svg className="ml-[148px] mt-[9px] h-[10px] w-[26px]" viewBox="0 0 26 10">
            <path d="M0 10h26L13 0z" fill="#73737b" />
          </svg>
          <Fit className="ml-[64px] mt-[10px] w-[195px] text-[49px] leading-[58px] text-[#d93d35]">13428.65</Fit>
          <div className="flex items-center">
            <span className="ml-[13px] text-[42px] leading-[60px]">综合行业</span>
            <Fit className="ml-[16px] w-[120px] text-[46px] leading-[60px] text-[#d93d35]">0.74%</Fit>
          </div>
        </div>
        <div className="grid w-[939px] grid-cols-4 pt-[10px]">
          <div className={item}>
            <svg className={icon} viewBox="0 0 78 70" fill="none" stroke="#666" strokeWidth="3.200" strokeLinecap="round" strokeLinejoin="round">
              <path d="M21 9.500A32 32 0 0 1 70 46l-1.500 4M68 50.500L75.500 45M57 61A32 32 0 0 1 11 20M2.500 21.500L12 17v8" />
              <path d="M28.500 20L39 33l10.500-13M27 33h24M27 44h24M39 33v20" />
            </svg>
            <span className={label}>交易</span>
          </div>
          <div className={item}>
            <svg className={icon} viewBox="0 0 78 70" fill="none" stroke="#666" strokeWidth="3.400" strokeLinecap="round">
              <path d="M50 5H17Q8.500 5 8.500 13v45q0 8.500 8.500 8.500h44q8.500 0 8.500-8.500V26" />
              <path d="M28 48l4-13 28-25 4 5-29 28z" fill="#666" stroke="none" />
              <path d="M61 9l4-4q4-1 5.500 3v3l-5 4.500z" fill="#666" stroke="none" />
            </svg>
            <span className={label}>发帖</span>
          </div>
          <div className={item}>
            <svg className={icon} viewBox="0 0 78 70" fill="none" stroke="#666" strokeWidth="3.200" strokeLinejoin="round">
              <rect x="10" y="6" width="26" height="26" rx="4" />
              <rect x="10" y="38.500" width="26" height="26" rx="4" />
              <rect x="42" y="38.500" width="26" height="26" rx="4" />
              <rect x="44" y="7.500" width="22" height="22" rx="4" transform="rotate(45 55 18.500)" />
            </svg>
            <span className={label}>功能</span>
          </div>
          <div className={item}>
            <svg className={icon} viewBox="0 0 78 70" fill="none">
              <circle cx="39" cy="35" r="31.500" stroke="#666" strokeWidth="3" />
              <g fill="#666">
                <circle cx="25" cy="35" r="3.600" />
                <circle cx="39" cy="35" r="3.600" />
                <circle cx="53" cy="35" r="3.600" />
              </g>
            </svg>
            <span className={label}>设自选</span>
          </div>
        </div>
      </div>
      <span className="mx-auto mt-[1px] h-[15px] w-[504px] rounded-full bg-[#bcbdbf]" />
    </div>
  );
}

export default function App() {
  return (
    <div className="flex h-[2800px] w-[1260px] flex-col overflow-hidden bg-white font-[Roboto,'Noto_Sans_CJK_SC',sans-serif]">
      <StatusBar />
      <Header />
      <Quote />
      <Notice />
      <PeriodTabs />
      <Legend />
      <PriceChart />
      <VolumeHead />
      <VolumeChart />
      <Dates />
      <Promo />
      <SectionTabs />
      <Cards />
      <BottomBar />
    </div>
  );
}
